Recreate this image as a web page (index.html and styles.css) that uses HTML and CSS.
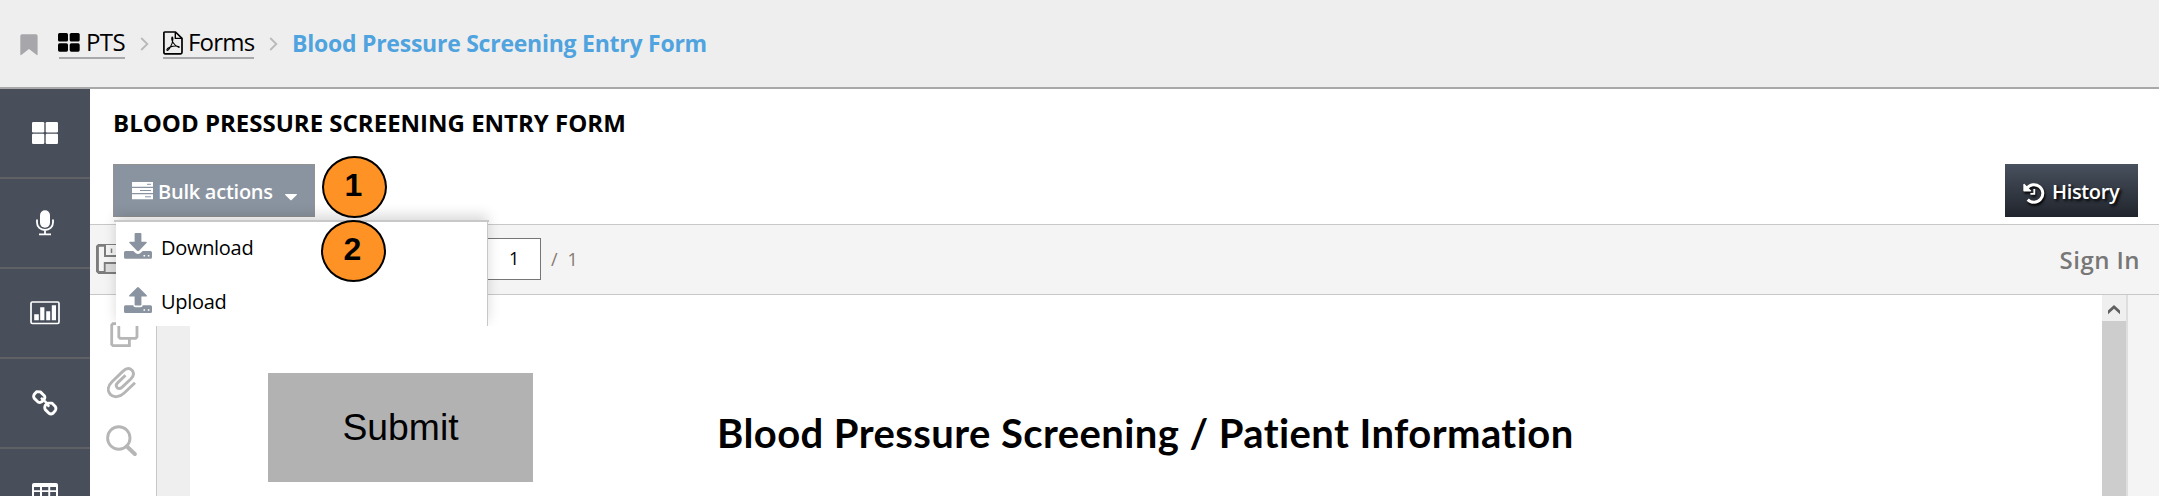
FILE: index.html
```
<!DOCTYPE html>
<html lang="en">
<head>
<meta charset="utf-8">
<title>Blood Pressure Screening Entry Form</title>
<link rel="stylesheet" href="styles.css">
</head>
<body>
<header class="topbar">
  <svg class="bookmark" width="18" height="22" viewBox="0 0 18 22"><path d="M2 .3H16Q17.6.3 17.6 2V20.3Q17.6 21.8 16.4 20.8L9 15 1.6 20.8Q.3 21.8.3 20.3V2Q.3.3 2 .3Z" fill="#a7a7ab"/></svg>
  <a class="crumb crumb-pts"><svg width="22" height="19" viewBox="0 0 22 19"><g fill="#000"><rect x="0" y="0" width="10" height="8.6" rx="1.6"/><rect x="11.7" y="0" width="10" height="8.6" rx="1.6"/><rect x="0" y="10.3" width="10" height="8.4" rx="1.6"/><rect x="11.7" y="10.3" width="10" height="8.4" rx="1.6"/></g></svg><span class="pts-text">PTS</span></a>
  <svg class="chev chev-a" width="9" height="14" viewBox="0 0 9 14"><path d="M1.2 1 7.3 7 1.2 13" fill="none" stroke="#b9b9b9" stroke-width="1.8"/></svg>
  <a class="crumb crumb-forms"><svg width="20" height="24" viewBox="0 0 20 24"><g fill="none" stroke="#000" stroke-width="1.7" stroke-linejoin="round"><path d="M1.8 1H12.5L19 7.3V21.3Q19 22.8 17.6 22.8H2.2Q.9 22.8.9 21.3V2Q.9 1 1.8 1Z"/><path d="M12.3 1.2V7.4H18.8" stroke-width="1.4"/><path d="M9 6.2C7.8 9 11.2 14.8 15.6 16.3 17.6 16.6 15.4 14.4 10 15.2 5.4 16 3.2 18.6 4 19.3 5.6 20 9.8 12.8 9.9 8.2 9.9 6.4 9.4 5.7 9 6.2Z" stroke-width="1.1"/></g></svg><span class="forms-text">Forms</span></a>
  <svg class="chev chev-b" width="9" height="14" viewBox="0 0 9 14"><path d="M1.2 1 7.3 7 1.2 13" fill="none" stroke="#b9b9b9" stroke-width="1.8"/></svg>
  <span class="current">Blood Pressure Screening Entry Form</span>
</header>
<div class="body">
  <nav class="side">
    <a class="side-item"><svg width="26" height="22" viewBox="0 0 26 22"><g fill="#fff"><rect width="12.3" height="10.4" rx="1.2"/><rect x="13.7" width="12.3" height="10.4" rx="1.2"/><rect y="11.8" width="12.3" height="10.2" rx="1.2"/><rect x="13.7" y="11.8" width="12.3" height="10.2" rx="1.2"/></g></svg></a>
    <a class="side-item"><svg width="18" height="26" viewBox="0 0 18 26"><rect x="4" y=".2" width="10" height="17.6" rx="5" fill="#fff"/><path d="M1 9.5V12.5C1 17 4.5 20 9 20S17 17 17 12.5V9.5M9 20V24.4M3 24.4H15" fill="none" stroke="#fff" stroke-width="1.8"/></svg></a>
    <a class="side-item"><svg width="30" height="24" viewBox="0 0 30 24"><rect x="1" y="1" width="28" height="21.5" rx="1.4" fill="none" stroke="#fff" stroke-width="1.7"/><path d="M4.2 13.3H8.8V19.3H4.2ZM10.2 6.3H14.4V19.3H10.2ZM16.2 10.3H20.2V19.3H16.2ZM21.8 4.3H26V19.3H21.8Z" fill="#fff"/></svg></a>
    <a class="side-item"><svg width="26" height="26" viewBox="0 0 26 26"><g fill="none" stroke="#fff" stroke-width="2.9" stroke-linejoin="round"><path d="M4.6 1.8 8.4 1.9 12.3 5.7Q13.4 7.2 12.3 9.1L9.9 11.7Q8.2 13.1 6 12L2.3 8.4Q1 6.4 2.3 4.2Z"/><path d="M15.7 13.1 19.9 13.1 23.3 16.6Q24.5 18.6 23.3 20.6L21 23.2Q19 24.6 16.9 23.2L13.3 19.6Q12.2 17.6 13.3 15.3Z"/><path d="M9 7.8 12.8 11.3M12.9 11.1 17.1 16.7" stroke-width="2.5"/></g></svg></a>
    <a class="side-item side-table"><svg width="26" height="22" viewBox="0 0 26 22"><path fill="#fff" fill-rule="evenodd" d="M2 0H24Q26 0 26 2V20Q26 22 24 22H2Q0 22 0 20V2Q0 0 2 0ZM2 4V7.2H8V4ZM10 4V7.2H16.3V4ZM18.2 4V7.2H24V4ZM2 9V13H8V9ZM10 9V13H16.3V9ZM18.2 9V13H24V9ZM2 15V19.8H8V15ZM10 15V19.8H16.3V15ZM18.2 15V19.8H24V15Z"/></svg></a>
  </nav>
  <main class="main">
    <section class="head">
      <h1 class="title">BLOOD PRESSURE SCREENING ENTRY FORM</h1>
      <div class="actions">
        <div class="bulk-wrap">
          <button class="bulk"><svg width="21" height="18" viewBox="0 0 21 18"><path d="M0 0H21V4.7H0ZM0 6H21V10.9H0ZM0 12.3H21V17.2H0Z" fill="#fff"/><path d="M15 2.3H19M8 8.5H19M13 14.8H19" stroke="#8a94a0" stroke-width="1"/></svg><span class="bulk-text">Bulk actions</span><svg class="caret" width="12" height="7" viewBox="0 0 12 7"><path d="M.5 0H11.5Q12.3.2 11.7 1L6.6 6.1Q6 6.6 5.4 6.1L.3 1Q-.3.2.5 0Z" fill="#fff"/></svg></button>
          <div class="menu">
            <a class="menu-item"><svg width="28" height="26" viewBox="0 0 28 26"><g fill="#8a94a0"><path d="M11.5 0H16.5Q17.4 0 17.4 1V8.7H22Q23.6 8.9 22.5 10.1L15 17.8Q14 18.7 13 17.8L5.5 10.1Q4.4 8.9 6 8.7H10.6V1Q10.6 0 11.5 0Z"/><path fill-rule="evenodd" d="M1.5 18H9.3L11.5 20Q14 22 16.5 20L18.7 18H26.5Q28 18 28 19.5V24.2Q28 25.7 26.5 25.7H1.5Q0 25.7 0 24.2V19.5Q0 18 1.5 18ZM19.5 22V23.5H21.1V22ZM23.8 22V23.5H25.4V22Z"/></g></svg><span>Download</span></a>
            <a class="menu-item"><svg width="28" height="26" viewBox="0 0 28 26"><g fill="#8a94a0"><path d="M14.9.4 22.5 8.1Q23.6 9.3 22 9.5H17.4V17.5Q17.4 18.5 16.5 18.5H11.5Q10.6 18.5 10.6 17.5V9.5H6Q4.4 9.3 5.5 8.1L13.1.4Q14-.4 14.9.4Z"/><path fill-rule="evenodd" d="M1.5 18.3H9.2Q9.5 20.2 11.5 20.2H16.5Q18.5 20.2 18.8 18.3H26.5Q28 18.3 28 19.8V24.4Q28 26 26.5 26H1.5Q0 26 0 24.4V19.8Q0 18.3 1.5 18.3ZM19.5 22.3V23.8H21.1V22.3ZM23.8 22.3V23.8H25.4V22.3Z"/></g></svg><span>Upload</span></a>
          </div>
          <span class="badge badge-one">1</span>
          <span class="badge badge-two">2</span>
        </div>
        <button class="history"><svg width="22" height="21" viewBox="0 0 22 21"><g fill="none" stroke="#fff"><path d="M3.8 5.4A8.8 8.8 0 1 1 4.7 16.6" stroke-width="3"/><path d="M11.3 6.1V10.9H7.4" stroke-width="1.8"/></g><path d="M.3 1.2V7.7Q.3 8.5 1.2 8.5H7.7L8.3 7.8 1.3.7Z" fill="#fff"/></svg><span class="hist-text">History</span></button>
      </div>
    </section>
    <section class="toolbar">
      <svg class="save" width="30" height="30" viewBox="0 0 30 30"><path d="M3 1.2H24L28.7 6V28.5H3L1.4 27V2.8Z" fill="#f4f4f4" stroke="#7d7d7d" stroke-width="3"/><path d="M9 1V12H22V1" fill="#f4f4f4" stroke="#7d7d7d" stroke-width="2"/><path d="M15.5 4.5V9" stroke="#7d7d7d" stroke-width="1.5"/><path d="M8.7 28V19H24V28" fill="#dcdcdc" stroke="#7d7d7d" stroke-width="1.8"/></svg>
      <span class="page-no">1</span><span class="page-slash">/</span><span class="page-total">1</span>
      <a class="signin">Sign In</a>
    </section>
    <section class="viewer">
      <aside class="tools">
        <svg width="32" height="30" viewBox="0 0 32 30"><g fill="none" stroke="#b6b6b6" stroke-width="2.8"><path d="M22.4 20V26.7H6L4.7 25.4V6L6 4.7H10M11.8 4V18L13.1 19.3H28.7L30 18V4"/></g></svg>
        <svg width="30" height="32" viewBox="0 0 30 32"><path d="M28 15.7 17.2 26C12.8 30.3 6.5 31 3.2 27.2 0 23.6 1 18.7 5 14.8L15.8 4.4C19.3 1 22.4.7 25 3.2 27.5 5.9 26.7 9 23.8 12L15.2 20.1C13.4 21.7 11.3 21.8 10 20.4 8.8 19 9 17.4 10.8 15.6L18.5 8.2" fill="none" stroke="#b6b6b6" stroke-width="2.9"/></svg>
        <svg class="search" width="31" height="31" viewBox="0 0 31 31"><circle cx="12.8" cy="13" r="11.2" fill="none" stroke="#b6b6b6" stroke-width="2.9"/><path d="M20.7 21.3 28.8 29" stroke="#b6b6b6" stroke-width="4" stroke-linecap="round"/></svg>
      </aside>
      <div class="page">
        <button class="submit">Submit</button>
        <h2 class="doc-title">Blood Pressure Screening / Patient Information</h2>
      </div>
      <div class="scroll"><svg width="12" height="10" viewBox="0 0 12 10"><path d="M0 9.2V5.6L6 0 12 5.6V9.2L6 3.7Z" fill="#606060"/></svg><div class="thumb"></div></div>
      <div class="gutter"></div>
    </section>
  </main>
</div>
</body>
</html>
```
FILE: styles.css
```
* { box-sizing: border-box; }
html { height: 496px; overflow: hidden; }
body { margin: 0; width: 2159px; height: 496px; overflow: hidden; background: #fff; color: #000; font-family: "Open Sans", sans-serif; white-space: nowrap; }
svg { display: block; flex: none; }
button { border: 0; margin: 0; padding: 0; font-family: inherit; }
h1, h2 { margin: 0; }

.topbar { height: 89px; background: #eee; border-bottom: 2px solid #a8a8a8; display: flex; align-items: flex-start; padding-left: 20px; }
.bookmark { margin-top: 34px; }
.crumb { display: flex; height: 59px; border-bottom: 2px solid #a8a8ab; font-size: 24px; line-height: 32px; }
.crumb-pts { margin-left: 21px; width: 66px; }
.crumb-pts svg { margin: 33px 0 0 -1px; }
.pts-text, .forms-text { margin-top: 26px; }
.pts-text { margin-left: 6px; letter-spacing: -.6px; }
.chev { margin-top: 37px; }
.chev-a { margin-left: 15px; }
.crumb-forms { margin-left: 14px; width: 91px; }
.crumb-forms svg { margin-top: 31px; }
.forms-text { margin-left: 5px; letter-spacing: -.8px; }
.chev-b { margin-left: 15px; }
.current { margin: 27px 0 0 14px; font-size: 23px; line-height: 33px; font-weight: 700; color: #4fa3df; letter-spacing: -.25px; }

.body { display: flex; height: 407px; }
.side { width: 90px; flex: none; background: #484f5b; overflow: hidden; }
.side-item { height: 90px; border-bottom: 2px solid #606164; display: flex; align-items: center; justify-content: center; }
.side-table { align-items: flex-start; padding-top: 34px; }
.main { flex: 1; min-width: 0; }

.head { height: 135px; padding: 17px 21px 0 23px; }
.title { font-size: 24px; line-height: 33px; font-weight: 700; }
.actions { display: flex; justify-content: space-between; margin-top: 25px; }
.bulk-wrap { position: relative; }
.bulk { position: relative; z-index: 1; width: 202px; height: 53px; background: #8a94a0; border: 1px solid #929292; color: #fff; display: flex; align-items: flex-start; padding: 17px 0 0 18px; }
.bulk-text { font-size: 20px; line-height: 27px; font-weight: 600; margin: -4px 0 0 5px; width: 116px; text-align: left; letter-spacing: -.25px; }
.caret { margin: 12px 0 0 11px; }
.menu { position: absolute; left: 3px; top: 56px; width: 372px; height: 106px; display: flex; flex-direction: column; gap: 28px; padding: 13px 0 0 8px; background: #fff; border-right: 1px solid #c8c8c8; box-shadow: 0 -5px 12px rgba(0,0,0,.15); clip-path: inset(-16px -16px 0 -16px); z-index: 2; }
.menu::before { content: ""; position: absolute; left: -2px; top: 0; width: 375px; height: 2px; background: #c8c8c8; }
.menu-item { display: flex; height: 26px; font-size: 20px; line-height: 28px; letter-spacing: -.3px; }
.menu-item span { margin: 1px 0 0 9px; }
.badge { position: absolute; z-index: 3; width: 65px; height: 62px; border: 2px solid #000; border-radius: 50%; background: #ff9224; display: flex; align-items: center; justify-content: center; font: bold 32px/32px "Liberation Sans", Arial, sans-serif; padding: 0 2px 4px 0; }
.badge-one { left: 209px; top: -8px; }
.badge-two { left: 208px; top: 56px; }
.history { width: 133px; height: 53px; background: linear-gradient(#48515e, #20242c); color: #fff; display: flex; padding: 19px 0 0 18px; text-shadow: 2px 2px 3px #000; }
.history svg { filter: drop-shadow(1px 2px 1px #000); }
.hist-text { font-size: 20px; line-height: 27px; font-weight: 600; margin: -5px 0 0 7px; letter-spacing: -.35px; }

.toolbar { height: 71px; background: #f4f4f4; border: solid #c8c8c8; border-width: 1px 0; display: flex; align-items: flex-start; padding-right: 19px; }
.save { margin: 19px 0 0 6px; }
.page-no { margin: 13px 0 0 352px; width: 63px; height: 42px; border: 1px solid #767676; background: #fff; font-size: 18px; line-height: 39px; padding-left: 30px; }
.page-slash, .page-total { font-size: 18px; line-height: 40px; color: #86796f; margin: 14px 0 0 10px; }
.signin { margin: 18px 0 0 auto; font-size: 24px; line-height: 33px; font-weight: 600; color: #777; letter-spacing: .45px; }

.viewer { height: 201px; display: flex; }
.tools { width: 67px; border-right: 1px solid #c8c8c8; padding: 24px 0 0 17px; }
.tools svg { margin-bottom: 18px; }
.tools svg + svg { margin-bottom: 26px; }
.tools .search { margin-left: -1px; }
.page { flex: 1; display: flex; border-left: 33px solid #efefef; padding: 78px 0 0 78px; }
.submit { width: 265px; height: 109px; background: #b2b2b2; font: 37.3px/109px "Liberation Sans", Arial, sans-serif; color: #000; }
.doc-title { margin: 36px 0 0 184px; font: bold 40px/48px Lato, sans-serif; letter-spacing: .42px; font-variant-ligatures: none; }
.scroll { width: 24px; background: #efefef; padding-top: 10px; }
.scroll svg { margin-left: 6px; }
.thumb { margin-top: 6px; height: 180px; background: #cdcdcd; }
.gutter { width: 33px; border-left: 2px solid #dedede; background: #f4f4f4; }
```
